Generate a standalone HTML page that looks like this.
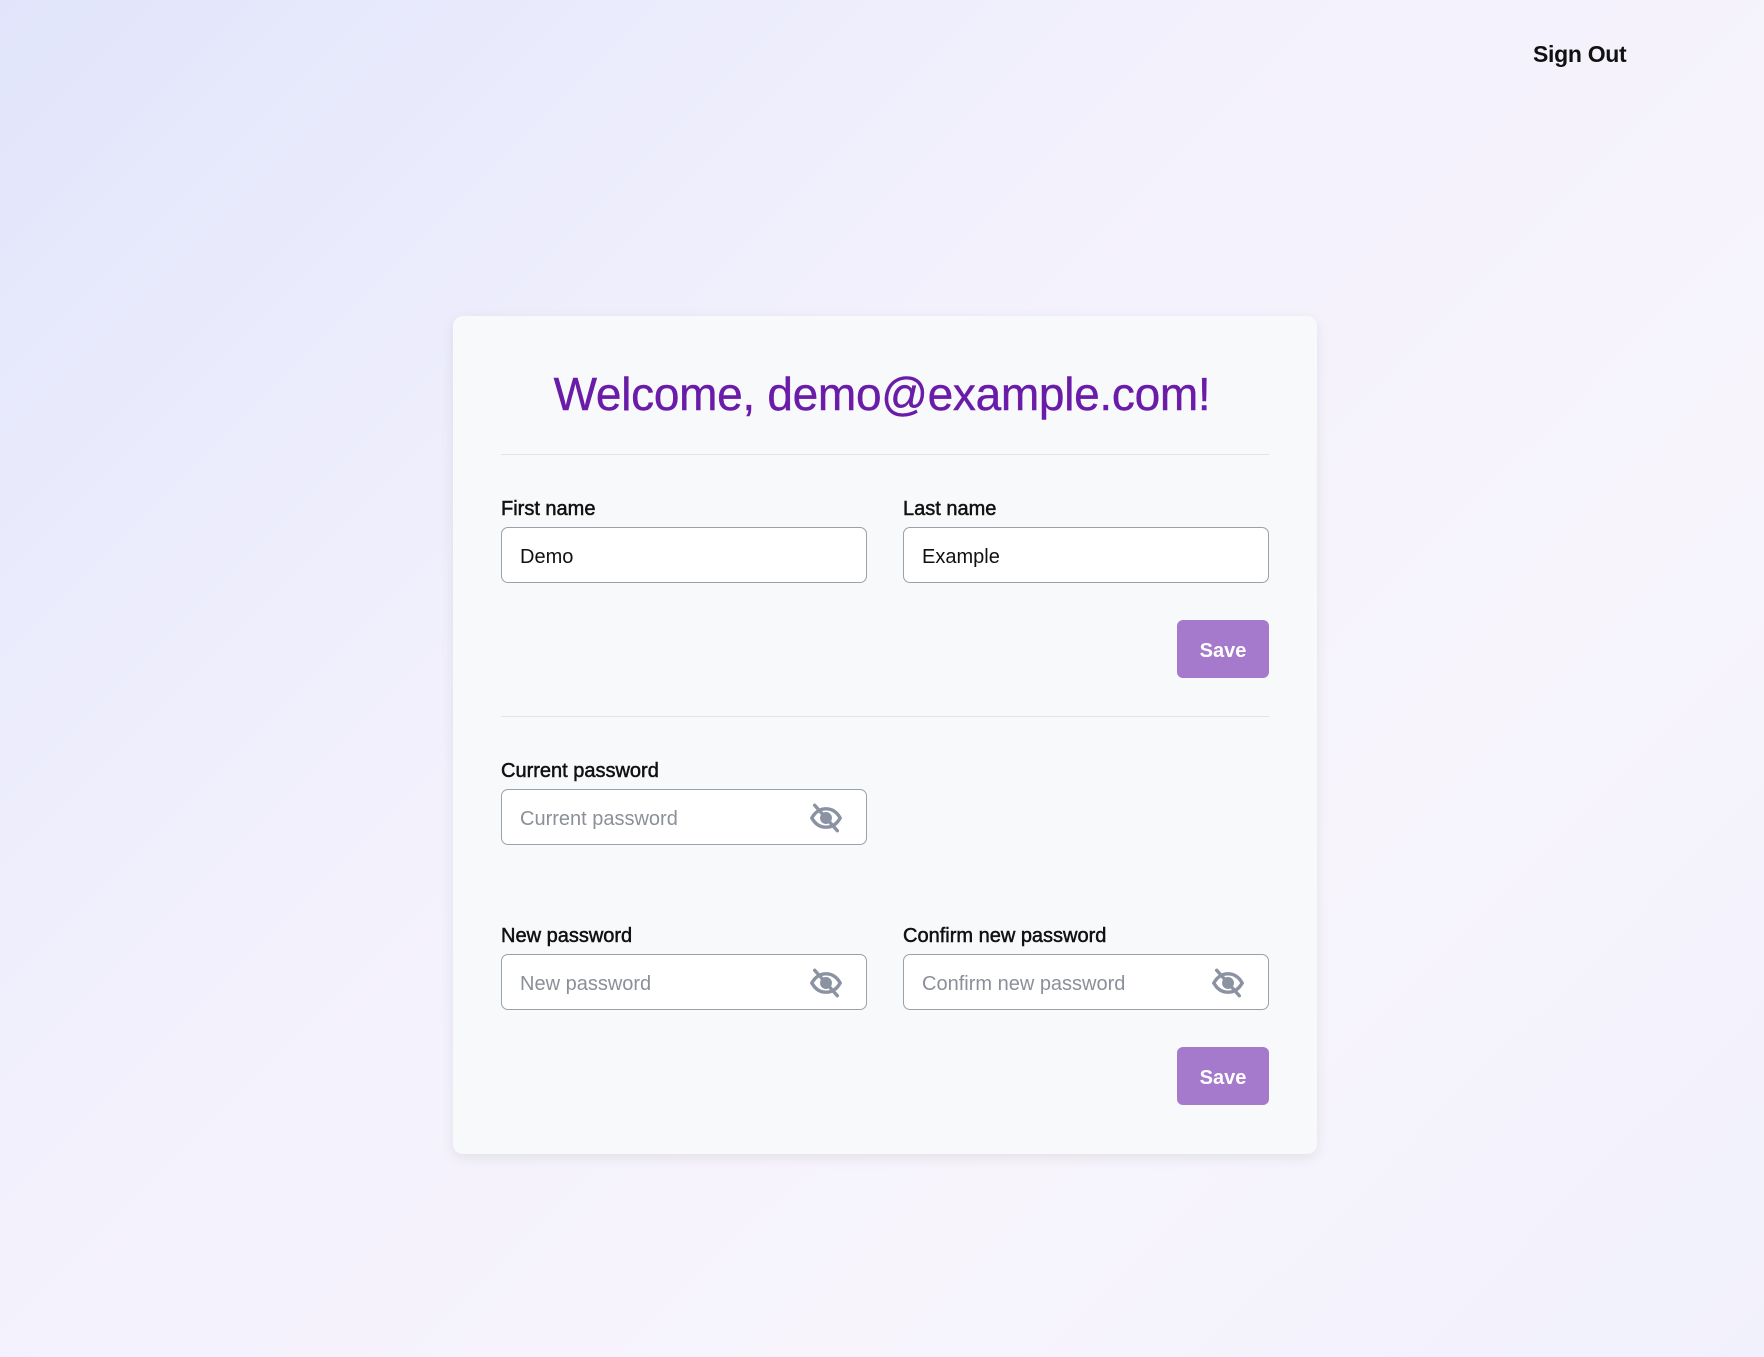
<!DOCTYPE html>
<html><head><meta charset="utf-8"><style>
*{box-sizing:border-box;margin:0;padding:0}
body{width:1764px;height:1357px;overflow:hidden;font-family:"Liberation Sans",sans-serif;background:linear-gradient(135deg,#e1e5fb 0%,#f3f1fc 40%,#f7f4fc 70%,#f1f1fc 100%);position:relative}
.so{position:absolute;left:1533px;top:41px;font-size:23px;color:#111;font-weight:bold;letter-spacing:-0.3px}
.card{position:absolute;left:453px;top:316px;width:864px;height:838px;background:#f8f9fb;border-radius:10px;box-shadow:0 4px 14px rgba(0,0,0,.08)}
h1{position:absolute;left:0;width:100%;top:367px;text-align:center;font-size:46px;font-weight:normal;color:#6a1ca8;letter-spacing:-0.3px;-webkit-text-stroke:0.4px #6a1ca8}
.hr{position:absolute;left:501px;width:768px;height:1px;background:#e3e4e8}
.lb{position:absolute;font-size:20px;color:#111;-webkit-text-stroke:0.5px #111}
.in{position:absolute;width:366px;height:56px;background:#fff;border:1px solid #9ca0a8;border-radius:7px;font-size:20px;padding-left:18px;line-height:58px;color:#111}
.ph{color:#8b8f98}
.in svg{position:absolute;right:23px;top:11px}
.btn{position:absolute;left:1177px;width:92px;height:58px;background:#a57acc;border-radius:6px;color:#fff;font-weight:bold;font-size:20px;text-align:center;line-height:62px}
</style></head><body>
<div class="so">Sign Out</div>
<div class="card"></div>
<h1>Welcome, demo@example.com!</h1>
<div class="hr" style="top:454px"></div>
<div class="lb" style="left:501px;top:498px">First name</div>
<div class="lb" style="left:903px;top:498px">Last name</div>
<div class="in" style="left:501px;top:527px">Demo</div>
<div class="in" style="left:903px;top:527px">Example</div>
<div class="btn" style="top:620px">Save</div>
<div class="hr" style="top:716px"></div>
<div class="lb" style="left:501px;top:760px">Current password</div>
<div class="in ph" style="left:501px;top:789px">Current password<svg width="34" height="34" viewBox="0 0 24 24" fill="none" stroke="#8b93a3" stroke-width="2.4" stroke-linecap="round"><path d="M2 12c2.5-4.5 6-6.5 10-6.5s7.5 2 10 6.5c-2.5 4.5-6 6.5-10 6.5S4.5 16.5 2 12z"/><circle cx="12" cy="12" r="3" fill="#8b93a3"/><path d="M4 3l16 18"/></svg></div>
<div class="lb" style="left:501px;top:925px">New password</div>
<div class="lb" style="left:903px;top:925px">Confirm new password</div>
<div class="in ph" style="left:501px;top:954px">New password<svg width="34" height="34" viewBox="0 0 24 24" fill="none" stroke="#8b93a3" stroke-width="2.4" stroke-linecap="round"><path d="M2 12c2.5-4.5 6-6.5 10-6.5s7.5 2 10 6.5c-2.5 4.5-6 6.5-10 6.5S4.5 16.5 2 12z"/><circle cx="12" cy="12" r="3" fill="#8b93a3"/><path d="M4 3l16 18"/></svg></div>
<div class="in ph" style="left:903px;top:954px">Confirm new password<svg width="34" height="34" viewBox="0 0 24 24" fill="none" stroke="#8b93a3" stroke-width="2.4" stroke-linecap="round"><path d="M2 12c2.5-4.5 6-6.5 10-6.5s7.5 2 10 6.5c-2.5 4.5-6 6.5-10 6.5S4.5 16.5 2 12z"/><circle cx="12" cy="12" r="3" fill="#8b93a3"/><path d="M4 3l16 18"/></svg></div>
<div class="btn" style="top:1047px">Save</div>
</body></html>
